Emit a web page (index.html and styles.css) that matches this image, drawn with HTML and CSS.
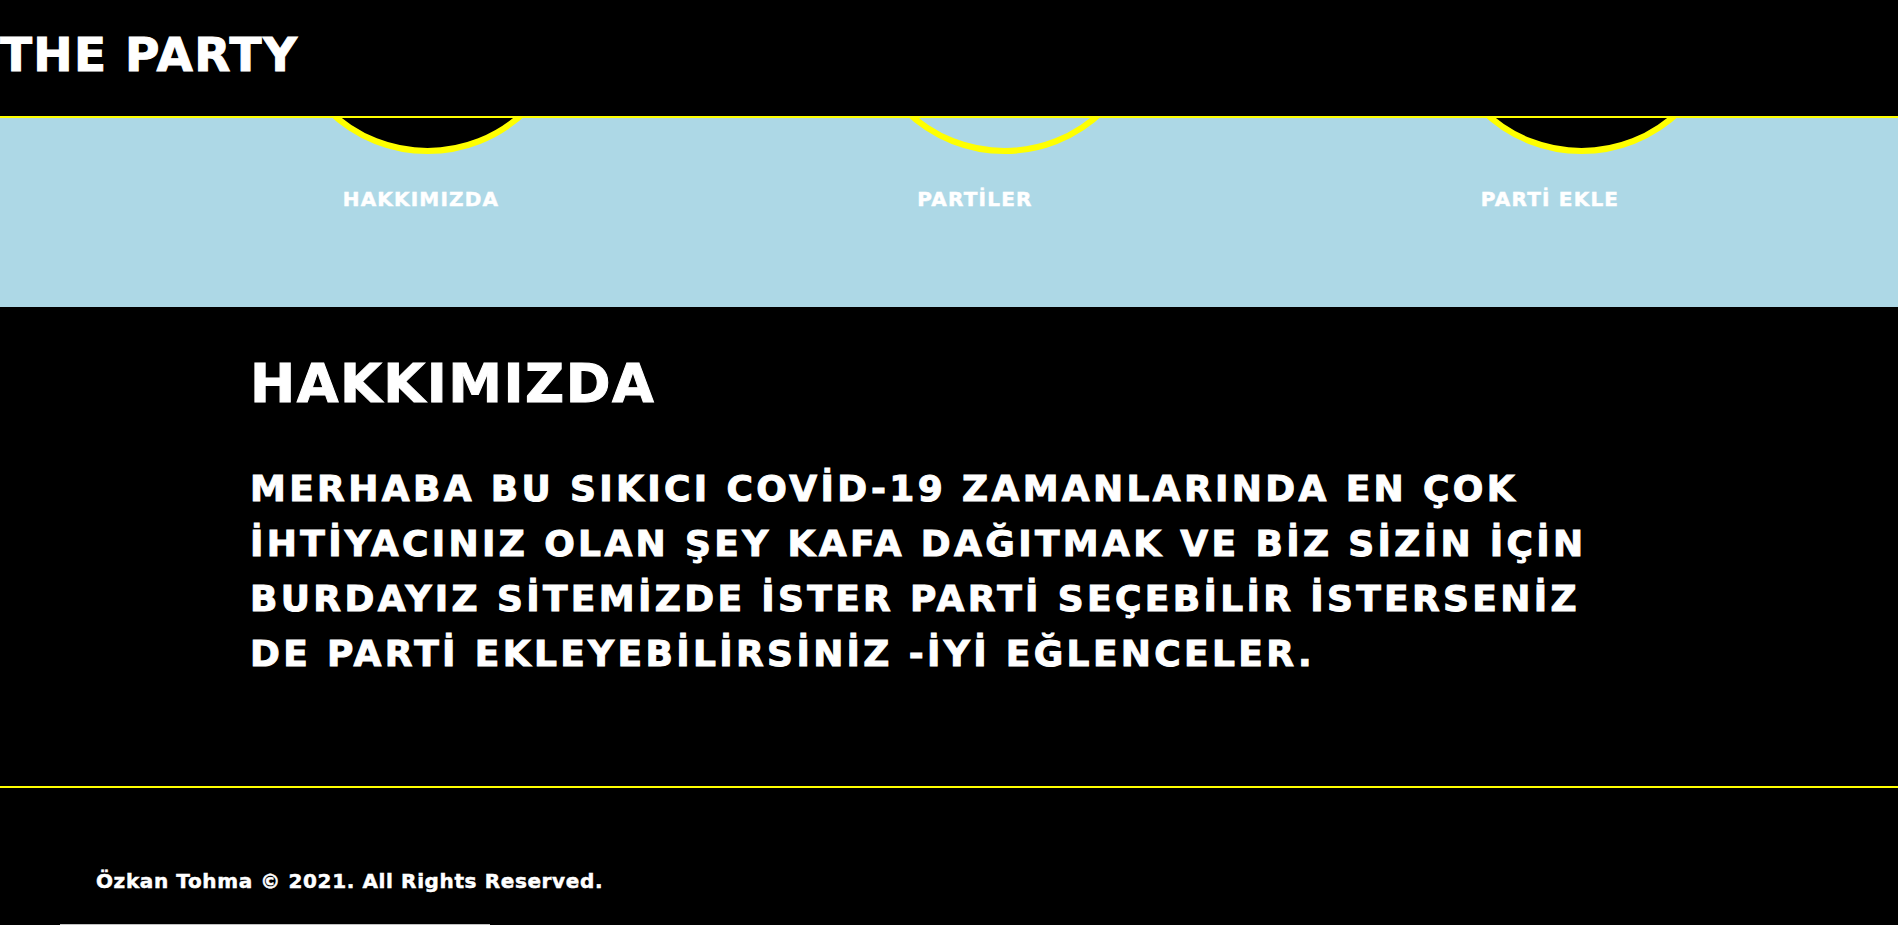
FILE: index.html
```html
<!DOCTYPE html>
<html lang="tr">
<head>
<meta charset="utf-8">
<title>THE PARTY</title>
<link rel="stylesheet" href="styles.css">
</head>
<body>
<header class="site-header">
  <h1 class="logo">THE PARTY</h1>
</header>
<nav class="menu">
  <a class="menu-item menu-item--about" href="#">
    <span class="menu-circle"></span>
    <span class="menu-label">HAKKIMIZDA</span>
  </a>
  <a class="menu-item menu-item--parties" href="#">
    <span class="menu-circle menu-circle--empty"></span>
    <span class="menu-label">PARTİLER</span>
  </a>
  <a class="menu-item menu-item--add" href="#">
    <span class="menu-circle"></span>
    <span class="menu-label">PARTİ EKLE</span>
  </a>
</nav>
<main class="about">
  <h2 class="about-title">HAKKIMIZDA</h2>
  <p class="about-text">MERHABA BU SIKICI COVİD-19 ZAMANLARINDA EN ÇOK İHTİYACINIZ OLAN ŞEY KAFA DAĞITMAK VE BİZ SİZİN İÇİN BURDAYIZ SİTEMİZDE İSTER PARTİ SEÇEBİLİR İSTERSENİZ DE PARTİ EKLEYEBİLİRSİNİZ -İYİ EĞLENCELER.</p>
</main>
<footer class="site-footer">
  <p class="copyright">Özkan Tohma © 2021. All Rights Reserved.</p>
</footer>
<div class="scroll-thumb"></div>
</body>
</html>
```
FILE: styles.css
```css
* {
  box-sizing: border-box;
}

html, body {
  margin: 0;
  padding: 0;
}

body {
  background: #000;
  color: #fff;
  font-family: "DejaVu Sans", "Liberation Sans", sans-serif;
  font-weight: bold;
  overflow: hidden;
}

.site-header {
  position: relative;
  z-index: 2;
  height: 118px;
  background: #000;
  border-bottom: 2px solid #ffff00;
  padding-top: 27px;
}

.logo {
  margin: 0;
  font-size: 47px;
  line-height: normal;
  letter-spacing: 1.3px;
  font-weight: bold;
  -webkit-text-stroke: 1px #fff;
}

.menu {
  display: grid;
  grid-template-columns: repeat(3, 577px);
  padding-left: 138.5px;
  height: 189px;
  background: #add8e6;
}

.menu-item {
  display: flex;
  flex-direction: column;
  align-items: center;
  color: #fff;
  text-decoration: none;
}

.menu-circle {
  display: block;
  width: 287px;
  height: 287px;
  margin-top: -251px;
  border-radius: 50%;
  border: 6px solid #ffff00;
  background: #000;
}

.menu-circle--empty {
  background: transparent;
}

.menu-label {
  display: block;
  width: 100%;
  margin-top: 33.2px;
  text-align: center;
  font-size: 20px;
  letter-spacing: 1.2px;
  -webkit-text-stroke: 0.5px #fff;
}

.menu-item--about .menu-label {
  padding-right: 12px;
}

.menu-item--parties .menu-label {
  padding-right: 58px;
}

.menu-item--add .menu-label {
  padding-right: 62px;
}

.about {
  height: 479px;
  padding: 45px 0 0 250px;
}

.about-title {
  margin: 0;
  font-size: 54px;
  line-height: normal;
  letter-spacing: 1.5px;
  -webkit-text-stroke: 1px #fff;
}

.about-text {
  margin: 46px 0 0;
  width: 1360px;
  font-size: 36px;
  line-height: 55px;
  letter-spacing: 3.35px;
  -webkit-text-stroke: 1px #fff;
}

.site-footer {
  border-top: 2px solid #ffff00;
  height: 300px;
  padding: 81px 0 0 96px;
}

.copyright {
  margin: 0;
  font-size: 20px;
  line-height: normal;
  letter-spacing: 0.62px;
  -webkit-text-stroke: 0.5px #fff;
}

.scroll-thumb {
  position: fixed;
  left: 60px;
  bottom: 0;
  width: 430px;
  height: 1px;
  background: #c1c1c1;
}
```
